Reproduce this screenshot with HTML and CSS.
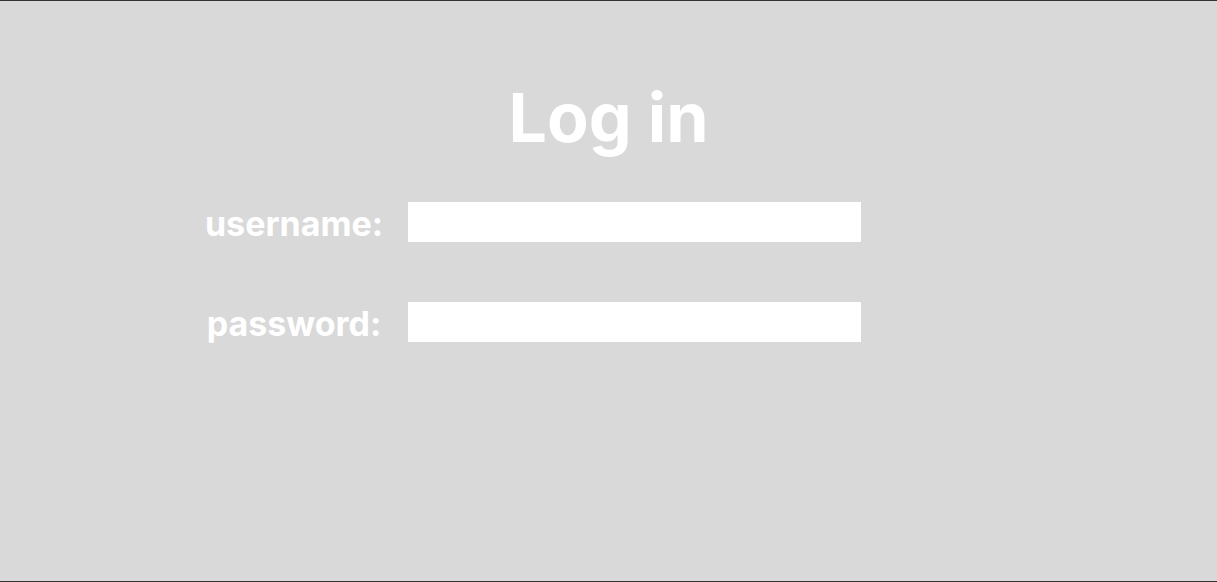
FILE: index.html
```html
<!DOCTYPE html>
<html>
<head>
  <title>Log in</title>
  <link rel="stylesheet" href="styles.css">
</head>
<body>
  <div class="frame">
    <h1 class="title">Log in</h1>
    <form class="login-form">
      <div class="form-row">
        <label for="username">username:</label>
        <input type="text" id="username">
      </div>
      <div class="form-row">
        <label for="password">password:</label>
        <input type="password" id="password">
      </div>
    </form>
  </div>
</body>
</html>
```

FILE: styles.css
```css
/* Reset styles */
* {
  box-sizing: border-box;
  margin: 0;
  padding: 0;
}

body {
  font-family: Inter, "Noto Sans", sans-serif;
  background-color: #d9d9d9;
  color: #fff;
}

/* Frame */
.frame {
  height: 582px;
  border-top: 1px solid #333;
  border-bottom: 1px solid #333;
  padding-top: 71px;
}

.title {
  font-size: 68px;
  font-weight: 700;
  line-height: 90px;
  text-align: center;
}

/* Form */
.login-form {
  display: flex;
  flex-direction: column;
  gap: 56px;
  margin-top: 40px;
  padding-left: 184px;
}

.form-row {
  display: flex;
  align-items: flex-start;
  gap: 4px;
}

.form-row label {
  width: 220px;
  font-size: 34px;
  font-weight: 700;
  line-height: 44px;
  text-align: center;
}

.form-row input {
  width: 453px;
  height: 40px;
  border: none;
  background-color: #fff;
  outline: none;
}
```
